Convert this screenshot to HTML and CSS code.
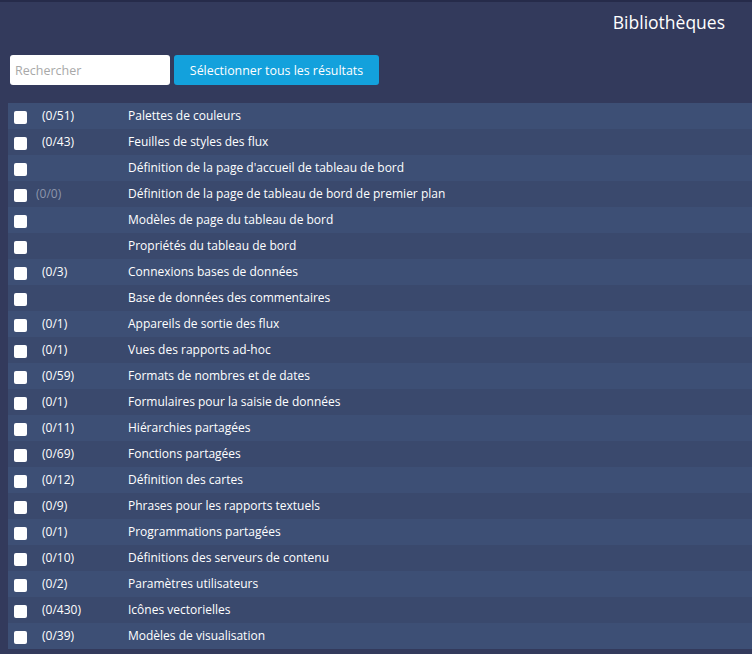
FILE: index.html
```html
<!DOCTYPE html>
<html lang="fr">
<head>
    <meta charset="UTF-8">
    <meta name="viewport" content="width=device-width, initial-scale=1.0">
    <title>Bibliothèques</title>
    <link rel="stylesheet" href="styles.css">
</head>
<body>
    <div class="header">
        <h2>Bibliothèques</h2>
    </div>

    <div class="toolbar">
        <input type="text" class="search" placeholder="Rechercher">
        <button class="select-all">Sélectionner tous les résultats</button>
    </div>

    <table class="libraries">
        <tbody>
            <tr><td class="chk"><span class="box"></span></td><td class="count">(0/51)</td><td>Palettes de couleurs</td></tr>
            <tr><td class="chk"><span class="box"></span></td><td class="count">(0/43)</td><td>Feuilles de styles des flux</td></tr>
            <tr><td class="chk"><span class="box"></span></td><td class="count"></td><td>Définition de la page d'accueil de tableau de bord</td></tr>
            <tr><td class="chk"><span class="box"></span></td><td class="count"><span class="empty">(0/0)</span></td><td>Définition de la page de tableau de bord de premier plan</td></tr>
            <tr><td class="chk"><span class="box"></span></td><td class="count"></td><td>Modèles de page du tableau de bord</td></tr>
            <tr><td class="chk"><span class="box"></span></td><td class="count"></td><td>Propriétés du tableau de bord</td></tr>
            <tr><td class="chk"><span class="box"></span></td><td class="count">(0/3)</td><td>Connexions bases de données</td></tr>
            <tr><td class="chk"><span class="box"></span></td><td class="count"></td><td>Base de données des commentaires</td></tr>
            <tr><td class="chk"><span class="box"></span></td><td class="count">(0/1)</td><td>Appareils de sortie des flux</td></tr>
            <tr><td class="chk"><span class="box"></span></td><td class="count">(0/1)</td><td>Vues des rapports ad-hoc</td></tr>
            <tr><td class="chk"><span class="box"></span></td><td class="count">(0/59)</td><td>Formats de nombres et de dates</td></tr>
            <tr><td class="chk"><span class="box"></span></td><td class="count">(0/1)</td><td>Formulaires pour la saisie de données</td></tr>
            <tr><td class="chk"><span class="box"></span></td><td class="count">(0/11)</td><td>Hiérarchies partagées</td></tr>
            <tr><td class="chk"><span class="box"></span></td><td class="count">(0/69)</td><td>Fonctions partagées</td></tr>
            <tr><td class="chk"><span class="box"></span></td><td class="count">(0/12)</td><td>Définition des cartes</td></tr>
            <tr><td class="chk"><span class="box"></span></td><td class="count">(0/9)</td><td>Phrases pour les rapports textuels</td></tr>
            <tr><td class="chk"><span class="box"></span></td><td class="count">(0/1)</td><td>Programmations partagées</td></tr>
            <tr><td class="chk"><span class="box"></span></td><td class="count">(0/10)</td><td>Définitions des serveurs de contenu</td></tr>
            <tr><td class="chk"><span class="box"></span></td><td class="count">(0/2)</td><td>Paramètres utilisateurs</td></tr>
            <tr><td class="chk"><span class="box"></span></td><td class="count">(0/430)</td><td>Icônes vectorielles</td></tr>
            <tr><td class="chk"><span class="box"></span></td><td class="count">(0/39)</td><td>Modèles de visualisation</td></tr>
        </tbody>
    </table>
</body>
</html>
```

FILE: styles.css
```css
body {
    margin: 0;
    font-family: "Open Sans", Arial, sans-serif;
    background-color: #333a5c;
    color: #fff;
    border-top: 2px solid #262b4a;
    overflow: hidden;
}
.header {
    display: flex;
    justify-content: flex-end;
    padding: 8px 27px 0 0;
    height: 45px;
}
.header h2 {
    margin: 0;
    font-size: 17.5px;
    font-weight: 400;
    line-height: 24px;
}
.toolbar {
    display: flex;
    gap: 4px;
    padding: 0 0 0 10px;
    height: 30px;
}
.search {
    width: 160px;
    height: 30px;
    box-sizing: border-box;
    border: none;
    border-radius: 3px;
    padding: 0 5px;
    font-family: inherit;
    font-size: 12.5px;
    color: #333;
}
.search::placeholder {
    color: #a8a8a8;
}
.select-all {
    width: 205px;
    height: 30px;
    border: none;
    border-radius: 3px;
    background-color: #13a1dc;
    color: #fff;
    font-family: inherit;
    font-size: 12.4px;
    cursor: pointer;
}
.libraries {
    margin: 18px 0 0 8px;
    width: calc(100% - 8px);
    border-collapse: collapse;
    font-size: 12px;
}
.libraries tr {
    height: 26px;
    background-color: #3d4f75;
}
.libraries tr:nth-child(even) {
    background-color: #3a496d;
}
.libraries td {
    padding: 0;
    vertical-align: middle;
    line-height: 26px;
    white-space: nowrap;
}
.libraries td.chk {
    width: 28px;
    padding-left: 6px;
}
.box {
    display: block;
    width: 13px;
    height: 13px;
    margin-top: 2px;
    background: #fff;
    border-radius: 2px;
}
.libraries td.count {
    width: 86px;
}
.empty {
    color: #8d96ac;
    margin-left: -6px;
}
```
